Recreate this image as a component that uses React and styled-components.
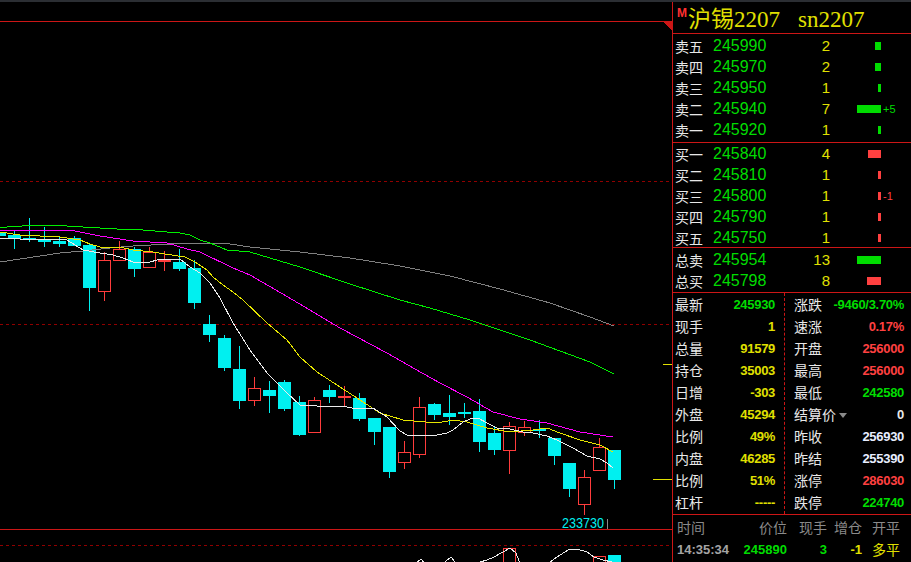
import React from 'react'
import styled, { createGlobalStyle } from 'styled-components'

const RED_LINE = '#cc1616'
const GREEN = '#00dc00'
const YELLOW = '#e0e000'
const RED = '#ff4040'
const WHITE = '#e8e8e8'
const CYAN = '#00f0f0'
const CANDLE_RED = '#ff3c3c'

const GlobalStyle = createGlobalStyle`
  html, body {
    margin: 0;
    padding: 0;
    background: #000;
  }
  body {
    width: 911px;
    height: 562px;
    overflow: hidden;
    font-family: "Liberation Sans", "Noto Sans CJK SC", sans-serif;
  }
`

// [center, bodyTop, bodyBottom, wickTop, wickBottom, up]
const candles = [
  [-1, 233, 236, 231, 238, 0],
  [14, 235, 239, 231, 249, 0],
  [29, 238, 240, 218, 242, 0],
  [44, 239, 242, 227, 247, 0],
  [59, 241, 244, 236, 247, 0],
  [74, 238, 246, 236, 246, 0],
  [89, 245, 288, 243, 311, 0],
  [104, 260, 292, 252, 301, 1],
  [119, 249, 261, 241, 261, 1],
  [134, 249, 269, 247, 277, 0],
  [149, 252, 268, 247, 268, 1],
  [164, 260, 262, 251, 271, 1],
  [179, 262, 269, 249, 271, 0],
  [194, 268, 303, 260, 309, 0],
  [209, 324, 335, 315, 342, 0],
  [224, 338, 368, 335, 371, 0],
  [239, 369, 401, 346, 409, 0],
  [254, 388, 401, 377, 406, 1],
  [269, 390, 396, 381, 413, 0],
  [284, 382, 409, 380, 411, 0],
  [299, 402, 435, 396, 436, 0],
  [314, 400, 433, 397, 433, 1],
  [329, 390, 397, 385, 403, 0],
  [344, 396, 397, 386, 406, 1],
  [359, 398, 419, 393, 421, 0],
  [374, 418, 432, 418, 445, 0],
  [389, 427, 472, 427, 478, 0],
  [404, 452, 463, 441, 469, 1],
  [419, 407, 455, 397, 458, 1],
  [434, 404, 415, 403, 420, 0],
  [449, 413, 417, 395, 425, 0],
  [464, 412, 414, 403, 418, 0],
  [479, 411, 442, 399, 452, 0],
  [494, 433, 450, 427, 455, 0],
  [509, 426, 451, 422, 474, 1],
  [524, 427, 433, 421, 436, 1],
  [539, 429, 431, 420, 438, 0],
  [554, 438, 456, 438, 465, 0],
  [569, 463, 489, 463, 497, 0],
  [584, 477, 505, 470, 515, 1],
  [599, 447, 471, 438, 471, 1],
  [614, 450, 480, 450, 489, 0],
]

const subCandles = [
  [509, 548, 570, 548, 570, 1],
  [599, 556, 570, 556, 570, 1],
  [614, 555, 570, 555, 570, 0],
]

const maLines = [
  {
    color: '#808080',
    pts: [[0,262],[20,259],[40,256],[60,253],[83,251],[110,248],[133,246],[170,244],[200,243],[230,244],[250,247],[300,252],[350,258],[400,266],[450,276],[500,289],[550,303],[590,317],[614,326]],
  },
  {
    color: '#00ee00',
    pts: [[0,228],[7,227],[22,226],[52,225],[67,226],[83,227],[117,229],[143,230],[167,232],[180,233],[190,235],[200,240],[210,243],[227,250],[250,252],[300,267],[350,284],[400,300],[430,308],[470,320],[500,330],[530,340],[560,351],[590,362],[614,374]],
  },
  {
    color: '#ff00ff',
    pts: [[0,230],[75,231],[85,233],[100,236],[133,241],[167,243],[187,249],[200,252],[233,268],[250,275],[293,300],[340,328],[387,353],[415,369],[440,383],[467,397],[493,412],[520,419],[547,423],[580,432],[613,437]],
  },
  {
    color: '#e6e600',
    pts: [[0,232],[20,235],[60,237],[80,240],[90,244],[100,247],[120,247],[133,250],[153,252],[165,254],[185,257],[195,262],[207,270],[213,277],[223,285],[233,292],[243,300],[267,323],[287,340],[300,357],[317,372],[340,387],[360,400],[380,413],[403,420],[437,423],[453,420],[467,422],[487,428],[510,432],[533,430],[547,428],[560,433],[580,440],[600,445],[613,452]],
  },
  {
    color: '#ececec',
    pts: [[0,238],[20,239],[37,239],[67,240],[83,250],[100,253],[113,255],[123,258],[133,262],[150,262],[157,260],[167,259],[180,259],[190,267],[200,273],[210,283],[220,298],[233,323],[250,350],[267,373],[287,393],[300,405],[317,406],[347,407],[357,409],[373,408],[387,417],[400,431],[407,435],[417,436],[437,435],[447,433],[453,430],[463,422],[470,419],[478,418],[487,423],[497,428],[510,429],[523,432],[533,433],[547,436],[557,440],[573,448],[587,456],[600,459],[607,463],[613,468]],
  },
]

const subLine = [[410,566],[416,563],[421,559],[427,566],[440,566],[451,557],[458,566],[474,566],[480,562],[487,560],[494,557],[503,552],[510,548],[516,553],[521,566],[545,566],[550,562],[557,557],[568,550],[577,549],[587,552],[594,557],[603,560],[612,562],[620,566]]

const toPoints = pts => pts.map(p => p.join(',')).join(' ')

const sells = [
  { label: '卖五', price: '245990', qty: '2', bar: 6 },
  { label: '卖四', price: '245970', qty: '2', bar: 6 },
  { label: '卖三', price: '245950', qty: '1', bar: 3 },
  { label: '卖二', price: '245940', qty: '7', bar: 24, delta: '+5' },
  { label: '卖一', price: '245920', qty: '1', bar: 3 },
]

const buys = [
  { label: '买一', price: '245840', qty: '4', bar: 13 },
  { label: '买二', price: '245810', qty: '1', bar: 3 },
  { label: '买三', price: '245800', qty: '1', bar: 3, delta: '-1' },
  { label: '买四', price: '245790', qty: '1', bar: 3 },
  { label: '买五', price: '245750', qty: '1', bar: 3 },
]

const totals = [
  { label: '总卖', price: '245954', qty: '13', bar: 24, color: GREEN },
  { label: '总买', price: '245798', qty: '8', bar: 14, color: RED },
]

const leftStats = [
  ['最新', '245930', GREEN],
  ['现手', '1', YELLOW],
  ['总量', '91579', YELLOW],
  ['持仓', '35003', YELLOW],
  ['日增', '-303', YELLOW],
  ['外盘', '45294', YELLOW],
  ['比例', '49%', YELLOW],
  ['内盘', '46285', YELLOW],
  ['比例', '51%', YELLOW],
  ['杠杆', '-----', YELLOW],
]

const rightStats = [
  ['涨跌', '-9460/3.70%', GREEN],
  ['速涨', '0.17%', RED],
  ['开盘', '256000', RED],
  ['最高', '256000', RED],
  ['最低', '242580', GREEN],
  ['结算价', '0', WHITE, true],
  ['昨收', '256930', '#e8eeff'],
  ['昨结', '255390', '#e8eeff'],
  ['涨停', '286030', RED],
  ['跌停', '224740', GREEN],
]

function Chart() {
  return (
    <ChartSvg width="672" height="560" viewBox="0 2 672 560" shapeRendering="crispEdges">
      <line x1="0" y1="21.5" x2="672" y2="21.5" stroke={RED_LINE} />
      <polygon points="663,22 672,22 672,31" fill={RED_LINE} />
      <line x1="0" y1="181.5" x2="672" y2="181.5" stroke="#900000" strokeDasharray="3 3" />
      <line x1="0" y1="324.5" x2="672" y2="324.5" stroke="#900000" strokeDasharray="3 3" />
      <line x1="0" y1="529.5" x2="672" y2="529.5" stroke={RED_LINE} />
      <line x1="0" y1="545.5" x2="672" y2="545.5" stroke="#900000" strokeDasharray="3 3" />

      {[...candles, ...subCandles].map(([c, t, b, wt, wb, up], i) =>
        up ? (
          <g key={i} stroke={CANDLE_RED} fill="none">
            {wt < t && <line x1={c + 0.5} x2={c + 0.5} y1={wt} y2={t} />}
            {wb > b && <line x1={c + 0.5} x2={c + 0.5} y1={b} y2={wb} />}
            <rect x={c - 5.5} y={t + 0.5} width="12" height={Math.max(b - t - 1, 1)} />
          </g>
        ) : (
          <g key={i} fill={CYAN}>
            <rect x={c} y={wt} width="1" height={wb - wt} />
            <rect x={c - 6} y={t} width="13" height={Math.max(b - t, 1)} />
          </g>
        )
      )}

      {maLines.map((l, i) => (
        <polyline key={i} points={toPoints(l.pts)} fill="none" stroke={l.color} strokeWidth="1" />
      ))}
      <polyline points={toPoints(subLine)} fill="none" stroke="#ececec" strokeWidth="1" />

      <line x1="663" y1="364.5" x2="672" y2="364.5" stroke={YELLOW} />
      <line x1="653" y1="479.5" x2="672" y2="479.5" stroke={YELLOW} />

      <text x="562" y="528" fill={CYAN} fontSize="15" fontFamily="Liberation Sans, sans-serif"
        textLength="42" lengthAdjust="spacingAndGlyphs" shapeRendering="auto">233730</text>
      <line x1="607.5" y1="519" x2="607.5" y2="529" stroke="#8a8a8a" />
    </ChartSvg>
  )
}

function BookSection({ rows, barColor, deltaColor, $height, $pad }) {
  return (
    <Book $height={$height} $pad={$pad}>
      {rows.map(r => (
        <BookRow key={r.label}>
          <Label>{r.label}</Label>
          <Price>{r.price}</Price>
          <Qty>{r.qty}</Qty>
          <BarCell>
            <Bar $w={r.bar} $color={r.color || barColor} />
          </BarCell>
          <Delta $color={deltaColor}>{r.delta}</Delta>
        </BookRow>
      ))}
    </Book>
  )
}

export default function App() {
  return (
    <>
      <GlobalStyle />
      <Screen>
        <TopStrip />
        <Main>
          <ChartPane>
            <Chart />
          </ChartPane>
          <Panel>
            <Header>
              <Mark>M</Mark>
              <Title>沪锡2207</Title>
              <Code>sn2207</Code>
            </Header>
            <BookSection rows={sells} barColor={GREEN} deltaColor={GREEN} $height={107} $pad={1} />
            <BookSection rows={buys} barColor={RED} deltaColor={RED} $height={104} $pad={0} />
            <BookSection rows={totals} $height={43} $pad={1} />
            <Stats>
              <StatCol $left>
                {leftStats.map(([k, v, c], i) => (
                  <StatRow key={i}>
                    <Label>{k}</Label>
                    <Value $color={c}>{v}</Value>
                  </StatRow>
                ))}
              </StatCol>
              <StatCol>
                {rightStats.map(([k, v, c, drop], i) => (
                  <StatRow key={i}>
                    <Label>
                      {k}
                      {drop && <DropArrow />}
                    </Label>
                    <Value $color={c}>{v}</Value>
                  </StatRow>
                ))}
              </StatCol>
            </Stats>
            <Trades>
              <TradeRow>
                <HeadCell>时间</HeadCell>
                <HeadCell $right>价位</HeadCell>
                <HeadCell $right>现手</HeadCell>
                <HeadCell $right>增仓</HeadCell>
                <HeadCell $pl>开平</HeadCell>
              </TradeRow>
              <TradeRow>
                <NumCell $color="#a4a4a4">14:35:34</NumCell>
                <NumCell $color={GREEN} $right>245890</NumCell>
                <NumCell $color={GREEN} $right>3</NumCell>
                <NumCell $color={YELLOW} $right>-1</NumCell>
                <KindCell>多平</KindCell>
              </TradeRow>
            </Trades>
          </Panel>
        </Main>
      </Screen>
    </>
  )
}

const Screen = styled.div`
  width: 911px;
  height: 562px;
  background: #000;
  display: flex;
  flex-direction: column;
  overflow: hidden;
`

const TopStrip = styled.div`
  height: 2px;
  background: #2b2e33;
  flex: none;
`

const Main = styled.div`
  flex: 1;
  display: flex;
  min-height: 0;
`

const ChartPane = styled.div`
  width: 672px;
  flex: none;
  overflow: hidden;
`

const ChartSvg = styled.svg`
  display: block;
`

const Panel = styled.div`
  flex: 1;
  border-left: 1px solid ${RED_LINE};
  display: flex;
  flex-direction: column;
  min-width: 0;
`

const Header = styled.div`
  height: 32px;
  border-bottom: 1px solid ${RED_LINE};
  display: flex;
  align-items: flex-start;
  padding-left: 4px;
  box-sizing: border-box;
  flex: none;
`

const Mark = styled.span`
  color: #ff3030;
  font: bold 12px "Liberation Sans", sans-serif;
  margin-top: 5px;
  line-height: 12px;
`

const Title = styled.span`
  color: ${YELLOW};
  font-family: "Liberation Serif", "Noto Sans CJK SC", serif;
  font-size: 23px;
  line-height: 24px;
  margin-top: 6px;
  margin-left: 1px;
`

const Code = styled(Title)`
  margin-left: 18px;
`

const Book = styled.div`
  height: ${p => p.$height}px;
  padding-top: ${p => p.$pad}px;
  box-sizing: content-box;
  border-bottom: 1px solid ${RED_LINE};
  flex: none;
  overflow: hidden;
`

const BookRow = styled.div`
  display: grid;
  grid-template-columns: 40px 72px 45px 51px 1fr;
  height: 21px;
  align-items: center;
`

const Label = styled.span`
  display: flex;
  align-items: center;
  color: ${WHITE};
  font-family: "Noto Sans CJK SC", sans-serif;
  font-size: 14px;
  line-height: 18px;
  padding-left: 2px;
`

const Price = styled.span`
  color: ${GREEN};
  font-size: 16px;
  line-height: 18px;
`

const Qty = styled.span`
  color: ${YELLOW};
  font-size: 15px;
  line-height: 18px;
  text-align: right;
`

const BarCell = styled.span`
  display: flex;
  justify-content: flex-end;
`

const Bar = styled.span`
  width: ${p => p.$w}px;
  height: 8px;
  background: ${p => p.$color};
`

const Delta = styled.span`
  color: ${p => p.$color};
  font-size: 11px;
  padding-left: 2px;
`

const Stats = styled.div`
  display: grid;
  grid-template-columns: 112px 1fr;
  height: 221px;
  border-bottom: 1px solid ${RED_LINE};
  flex: none;
`

const StatCol = styled.div`
  display: flex;
  flex-direction: column;
  border-right: ${p => (p.$left ? `1px dashed ${RED_LINE}` : 'none')};
  padding: ${p => (p.$left ? '0 9px 0 0' : '0 7px 0 7px')};
`

const StatRow = styled.div`
  height: 22px;
  display: flex;
  align-items: center;
  justify-content: space-between;
`

const Value = styled.span`
  color: ${p => p.$color};
  font: bold 13px "Liberation Sans", sans-serif;
  letter-spacing: -0.3px;
`

const DropArrow = styled.span`
  display: inline-block;
  width: 0;
  height: 0;
  margin-left: 3px;
  margin-top: 2px;
  border-left: 4.5px solid transparent;
  border-right: 4.5px solid transparent;
  border-top: 5px solid #8a8a8a;
`

const Trades = styled.div`
  flex: 1;
  padding-left: 4px;
`

const TradeRow = styled.div`
  display: grid;
  grid-template-columns: 60px 50px 40px 35px 1fr;
  height: 22px;
  align-items: center;
  &:first-child {
    margin-top: 1px;
  }
`

const HeadCell = styled.span`
  color: #8a8a8a;
  font-family: "Noto Sans CJK SC", sans-serif;
  font-size: 14px;
  text-align: ${p => (p.$right ? 'right' : 'left')};
  padding-left: ${p => (p.$pl ? '10px' : '0')};
`

const NumCell = styled.span`
  color: ${p => p.$color};
  font: bold 13px "Liberation Sans", sans-serif;
  text-align: ${p => (p.$right ? 'right' : 'left')};
`

const KindCell = styled.span`
  color: ${YELLOW};
  font-family: "Noto Sans CJK SC", sans-serif;
  font-size: 14px;
  padding-left: 10px;
`
